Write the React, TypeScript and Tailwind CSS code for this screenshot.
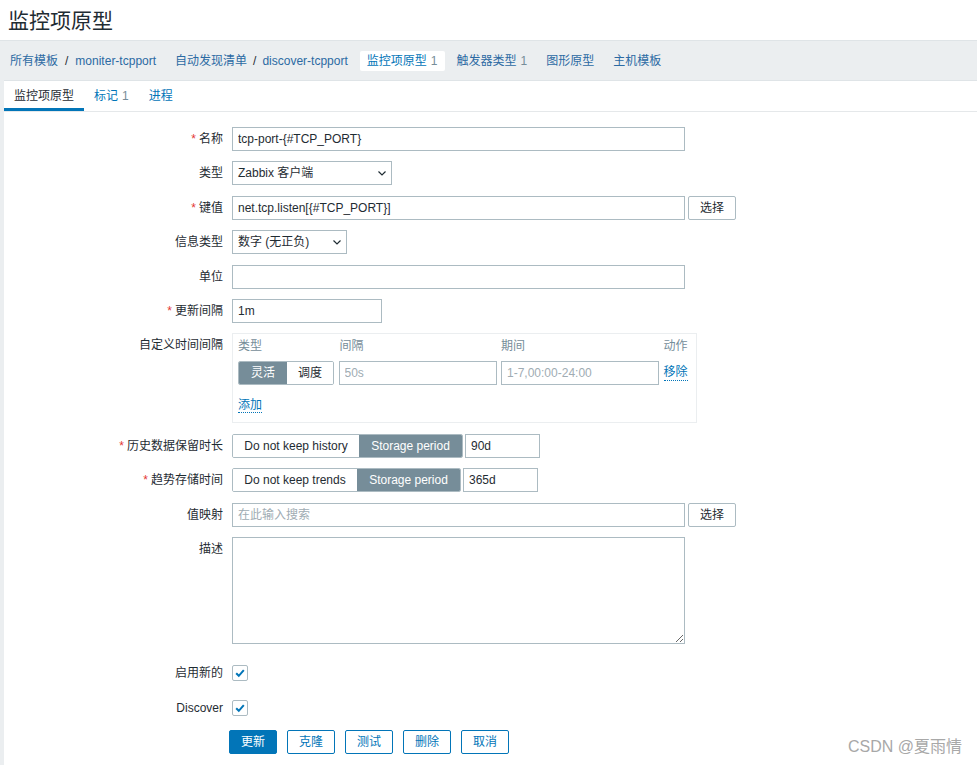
import React from "react";

const LINK = "text-[#0275b8]";

function Chevron() {
  return (
    <svg width="12" height="12" viewBox="0 0 12 12" className="shrink-0">
      <path d="M2.5 4.5 L6 8 L9.5 4.5" fill="none" stroke="#1f2c33" strokeWidth="1.2" />
    </svg>
  );
}

function Check() {
  return (
    <div className="flex h-4 w-4 items-center justify-center rounded-[2px] border border-[#acbbc2] bg-white">
      <svg width="12" height="12" viewBox="0 0 12 12">
        <path d="M2.2 6.2 L4.8 8.8 L9.8 3.2" fill="none" stroke="#0275b8" strokeWidth="2" />
      </svg>
    </div>
  );
}

function Label({ text, required, top }: { text: string; required?: boolean; top?: boolean }) {
  return (
    <div className={`text-right text-[12px] leading-6 text-[#1f2c33] ${top ? "self-start" : ""}`}>
      {required ? <span className="mr-[3px] text-[#e33734]">*</span> : null}
      {text}
    </div>
  );
}

function TextInput({ value, placeholder, w }: { value?: string; placeholder?: string; w: string }) {
  return (
    <input
      readOnly
      value={value ?? ""}
      placeholder={placeholder}
      className={`h-6 ${w} border border-[#acbbc2] bg-white px-[5px] text-[12px] text-[#1f2c33] placeholder:text-[#a0acb3] focus:outline-none`}
    />
  );
}

function Select({ value, w }: { value: string; w: string }) {
  return (
    <div className={`flex h-6 ${w} items-center justify-between border border-[#acbbc2] bg-white pl-[5px] pr-[3px] text-[12px] text-[#1f2c33]`}>
      <span>{value}</span>
      <Chevron />
    </div>
  );
}

function GreyButton({ text }: { text: string }) {
  return (
    <button className="h-6 w-12 rounded-[2px] border border-[#acbbc2] bg-white text-[12px] text-[#1f2c33]">
      {text}
    </button>
  );
}

function Segmented({ items }: { items: { text: string; w: string; active?: boolean }[] }) {
  return (
    <div className="flex h-6 overflow-hidden rounded-[2px] border border-[#acbbc2]">
      {items.map((it) => (
        <div
          key={it.text}
          className={`flex ${it.w} items-center justify-center text-[12px] ${
            it.active ? "bg-[#768d99] text-white" : "bg-white text-[#1f2c33]"
          }`}
        >
          {it.text}
        </div>
      ))}
    </div>
  );
}

function Crumb({ children, active }: { children: React.ReactNode; active?: boolean }) {
  return (
    <div
      className={`flex h-5 items-center rounded-[2px] px-[7px] ${active ? "bg-white" : ""}`}
    >
      {children}
    </div>
  );
}

export default function App() {
  return (
    <div className="relative flex min-h-[765px] flex-col overflow-hidden bg-[#ebeef0] font-[family-name:'Liberation_Sans','Noto_Sans_CJK_SC',sans-serif] text-[#1f2c33]">
      <div className="flex h-10 items-center bg-white pl-[8px]">
        <h1 className="text-[21px] leading-none">监控项原型</h1>
      </div>

      <nav className="flex h-10 items-center gap-[5px] border-t border-[#dfe4e7] pl-[3px] text-[12px] text-[#2b6aa3]">
        <Crumb>
          所有模板<span className="mx-[7px] text-[#1f2c33]">/</span>moniter-tcpport
        </Crumb>
        <Crumb>
          自动发现清单<span className="mx-[6px] text-[#1f2c33]">/</span>discover-tcpport
        </Crumb>
        <Crumb active>
          <span className={LINK}>监控项原型</span>
          <span className="ml-[4px] text-[#768d99]">1</span>
        </Crumb>
        <Crumb>
          触发器类型<span className="ml-[4px] text-[#768d99]">1</span>
        </Crumb>
        <Crumb>图形原型</Crumb>
        <Crumb>主机模板</Crumb>
      </nav>

      <main className="ml-[4px] flex flex-1 flex-col border-t border-[#dfe4e7] bg-white">
        <div className="flex h-[31px] border-b border-[#e5e8ea] text-[12px]">
          <div className="flex items-center border-b-[3px] border-[#0275b8] px-[10px] pt-[3px] text-[#1f2c33]">
            监控项原型
          </div>
          <div className={`flex items-center px-[10px] ${LINK}`}>
            标记<span className="ml-[4px] text-[#768d99]">1</span>
          </div>
          <div className={`flex items-center px-[10px] ${LINK}`}>进程</div>
        </div>

        <div className="grid grid-cols-[219px_1fr] items-center gap-x-[9px] gap-y-[10.4px] pt-[15px]">
          <Label text="名称" required />
          <TextInput value="tcp-port-{#TCP_PORT}" w="w-[453px]" />

          <Label text="类型" />
          <Select value="Zabbix 客户端" w="w-[160px]" />

          <Label text="键值" required />
          <div className="flex gap-[3px]">
            <TextInput value="net.tcp.listen[{#TCP_PORT}]" w="w-[453px]" />
            <GreyButton text="选择" />
          </div>

          <Label text="信息类型" />
          <Select value="数字 (无正负)" w="w-[115px]" />

          <Label text="单位" />
          <TextInput w="w-[453px]" />

          <Label text="更新间隔" required />
          <TextInput value="1m" w="w-[150px]" />

          <Label text="自定义时间间隔" top />
          <div className="h-[90px] w-[465px] border border-[#ebeef0] px-[5px] pt-[4px]">
            <div className="grid grid-cols-[96px_158px_158px_auto] gap-x-[4.5px] text-[12px] text-[#768d99]">
              <div className="leading-4">类型</div>
              <div className="pl-[1px] leading-4">间隔</div>
              <div className="leading-4">期间</div>
              <div className="leading-4">动作</div>
              <div className="mt-[7px]">
                <Segmented
                  items={[
                    { text: "灵活", w: "w-[48px]", active: true },
                    { text: "调度", w: "w-[46px]" },
                  ]}
                />
              </div>
              <div className="mt-[7px]">
                <TextInput placeholder="50s" w="w-[158px]" />
              </div>
              <div className="mt-[7px]">
                <TextInput placeholder="1-7,00:00-24:00" w="w-[158px]" />
              </div>
              <div className="mt-[7px] flex h-6 items-center">
                <span className={`${LINK} border-b border-dotted border-[#0275b8] leading-[15px]`}>移除</span>
              </div>
            </div>
            <div className="mt-[11px] leading-4">
              <span className={`${LINK} border-b border-dotted border-[#0275b8] text-[12px] leading-[15px]`}>添加</span>
            </div>
          </div>

          <Label text="历史数据保留时长" required />
          <div className="flex gap-[2px]">
            <Segmented
              items={[
                { text: "Do not keep history", w: "w-[126px]" },
                { text: "Storage period", w: "w-[103px]", active: true },
              ]}
            />
            <TextInput value="90d" w="w-[75px]" />
          </div>

          <Label text="趋势存储时间" required />
          <div className="flex gap-[2px]">
            <Segmented
              items={[
                { text: "Do not keep trends", w: "w-[124px]" },
                { text: "Storage period", w: "w-[103px]", active: true },
              ]}
            />
            <TextInput value="365d" w="w-[75px]" />
          </div>

          <Label text="值映射" />
          <div className="flex gap-[3px]">
            <TextInput placeholder="在此输入搜索" w="w-[453px]" />
            <GreyButton text="选择" />
          </div>

          <Label text="描述" top />
          <textarea
            readOnly
            className="mb-[7px] block h-[107px] w-[453px] border border-[#acbbc2] bg-white px-[5px] text-[12px] focus:outline-none"
          />

          <Label text="启用新的" />
          <div className="flex h-6 items-center">
            <Check />
          </div>

          <Label text="Discover" />
          <div className="flex h-6 items-center">
            <Check />
          </div>

          <div />
          <div className="ml-[-3px] flex gap-[10px]">
            <button className="h-6 w-12 rounded-[2px] border border-[#0275b8] bg-[#0275b8] text-[12px] text-white">
              更新
            </button>
            {["克隆", "测试", "删除", "取消"].map((t) => (
              <button
                key={t}
                className="h-6 w-12 rounded-[2px] border border-[#0275b8] bg-white text-[12px] text-[#0275b8]"
              >
                {t}
              </button>
            ))}
          </div>
        </div>
      </main>

      <div className="absolute bottom-[6px] right-[15px] text-[16px] text-[#a8a8a8]">CSDN @夏雨情</div>
    </div>
  );
}
